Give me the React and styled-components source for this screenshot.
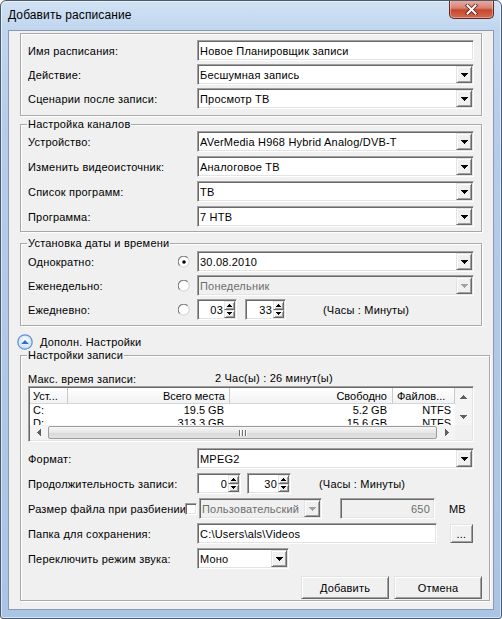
import React from 'react'
import styled, { createGlobalStyle, css } from 'styled-components'

const Global = createGlobalStyle`
  html, body { margin: 0; padding: 0; background: #fff; }
  body {
    font-family: 'Liberation Sans', Arial, sans-serif;
    font-size: 11px;
    letter-spacing: 0.2px;
    color: #000;
  }
`

const sunken = css`
  box-sizing: border-box;
  border: 1px solid;
  border-color: #a0a0a0 #fff #fff #a0a0a0;
  box-shadow: inset 1px 1px 0 #696969, inset -1px -1px 0 #e3e3e3;
`

const raised = css`
  box-sizing: border-box;
  background: #f0f0f0;
  border: 1px solid;
  border-color: #e3e3e3 #696969 #696969 #e3e3e3;
  box-shadow: inset 1px 1px 0 #fff, inset -1px -1px 0 #a0a0a0;
`

const Frame = styled.div`
  width: 502px;
  height: 619px;
  box-sizing: border-box;
  display: flex;
  flex-direction: column;
  border: 1px solid #4a5b70;
  border-radius: 6px 6px 3px 3px;
  background: linear-gradient(180deg, #d2e2f4 0px, #c0d6ef 28px, #b5cdeb 120px, #a9c4e5 619px);
  box-shadow: inset 0 0 0 1px rgba(255, 255, 255, 0.55);
  overflow: hidden;
`

const TitleBar = styled.div`
  height: 29px;
  flex: none;
  display: flex;
  align-items: flex-start;
  padding-left: 7px;
`

const Title = styled.span`
  font-family: 'Liberation Sans', Arial, sans-serif;
  font-size: 12px;
  letter-spacing: 0.1px;
  line-height: 29px;
  color: #000;
`

const CloseBtn = styled.div`
  margin-left: auto;
  margin-right: 7px;
  margin-top: -1px;
  width: 45px;
  height: 19px;
  box-sizing: border-box;
  border: 1px solid #5e2a24;
  border-top: none;
  border-radius: 0 0 5px 5px;
  background: linear-gradient(180deg, #eab0a5 0%, #d98070 45%, #c4482f 55%, #d5694f 100%);
  box-shadow: inset 0 0 0 1px rgba(255, 255, 255, 0.35);
  display: flex;
  align-items: center;
  justify-content: center;
`

const Client = styled.div`
  flex: 1;
  margin: 0 7px 8px 7px;
  background: #f0f0f0;
  border: 1px solid #8a9bb1;
  padding: 2px 3px 0 11px;
  display: flex;
  flex-direction: column;
  align-items: flex-start;
`

const etched = css`
  box-sizing: border-box;
  border: 1px solid #a8a8a8;
  box-shadow: inset 1px 1px 0 #fff, 1px 1px 0 #fff;
`

const Box = styled.div`
  ${etched};
  width: 462px;
  padding: 6px 7px 6px 7px;
`

const Group = styled.fieldset`
  ${etched};
  margin: ${p => p.$mt || 0}px 0 0 0;
  width: ${p => (p.$wide ? 470 : 462)}px;
  padding: 0 ${p => (p.$wide ? 15 : 7)}px ${p => p.$pb || 0}px 7px;
  min-width: 0;
`

const Legend = styled.legend`
  padding: 0 1px;
  margin-left: -1px;
  line-height: 13px;
  background: #f0f0f0;
`

const Rows = styled.div`
  display: flex;
  flex-direction: column;
  gap: ${p => p.$gap}px;
  margin-top: ${p => p.$mt || 0}px;
`

const Row = styled.div`
  display: flex;
  align-items: center;
  height: ${p => p.$h || 21}px;
  margin-top: ${p => p.$mt || 0}px;
`

const Label = styled.span`
  flex: none;
  width: ${p => p.$w || 169}px;
  white-space: nowrap;
  overflow: hidden;
  padding-top: 1px;
`

const Note = styled.span`
  margin-left: ${p => p.$ml}px;
  padding-top: 1px;
  white-space: nowrap;
`

const Field = styled.div`
  ${sunken};
  flex: none;
  width: ${p => p.$w}px;
  height: ${p => p.$h || 21}px;
  margin-left: ${p => p.$ml || 0}px;
  padding: 1px 1px 1px 2px;
  display: flex;
  align-items: center;
  background: ${p => (p.$disabled ? '#f0f0f0' : '#fff')};
  color: ${p => (p.$disabled ? '#6d6d6d' : '#000')};
`

const FieldText = styled.span`
  flex: 1;
  white-space: nowrap;
  overflow: hidden;
  padding-top: 1px;
  padding-right: ${p => p.$pr || 0}px;
  text-align: ${p => (p.$right ? 'right' : 'left')};
`

const DropBtn = styled.div`
  ${raised};
  flex: none;
  width: 16px;
  height: 17px;
  display: flex;
  align-items: center;
  justify-content: center;
`

const SpinCol = styled.div`
  flex: none;
  width: 11px;
  height: 17px;
  display: flex;
  flex-direction: column;
`

const SpinBtn = styled.div`
  ${raised};
  flex: 1;
  display: flex;
  align-items: center;
  justify-content: center;
`

const RadioWrap = styled.span`
  flex: none;
  width: 12px;
  height: 12px;
  margin-right: 7px;
  display: flex;
`

const Check = styled.span`
  ${sunken};
  flex: none;
  width: 12px;
  height: 12px;
  background: #fff;
  margin-right: 1px;
`

const Toggle = styled.div`
  display: flex;
  align-items: center;
  gap: 7px;
  height: 15px;
  margin: 8px 0 0 -3px;
`

const List = styled.div`
  ${sunken};
  flex: none;
  width: 446px;
  height: 56px;
  padding: 1px;
  background: #fff;
  display: grid;
  grid-template-columns: 1fr 17px;
  grid-template-rows: 1fr 15px;
  overflow: hidden;
  letter-spacing: 0;
`

const ListBody = styled.div`
  overflow: hidden;
`

const ListRow = styled.div`
  display: flex;
  height: ${p => (p.$head ? 16 : 13)}px;
  line-height: ${p => (p.$head ? 16 : 13)}px;
`

const Cell = styled.div`
  flex: none;
  box-sizing: border-box;
  width: ${p => p.$w}px;
  padding: 0 ${p => p.$pr || 4}px 0 ${p => p.$pl || 3}px;
  text-align: ${p => p.$align || 'left'};
  white-space: nowrap;
  overflow: hidden;
  ${p => p.$head && css`
    background: linear-gradient(180deg, #ffffff, #f1f2f4);
    border-right: 1px solid #c9c9c9;
    border-bottom: 1px solid #d5d5d5;
  `}
`

const VScroll = styled.div`
  background: #f4f4f4;
  display: flex;
  flex-direction: column;
  justify-content: space-between;
`

const ScrollArrow = styled.div`
  height: ${p => p.$h || 17}px;
  width: ${p => p.$w || 17}px;
  flex: none;
  display: flex;
  align-items: center;
  justify-content: center;
`

const HScroll = styled.div`
  background: #f4f4f4;
  display: flex;
  align-items: center;
`

const Thumb = styled.div`
  flex: 1;
  height: 13px;
  margin: 0 1px;
  box-sizing: border-box;
  border: 1px solid #9c9c9c;
  border-radius: 2px;
  background: linear-gradient(180deg, #f6f6f6 0%, #e6e6e6 50%, #d8d8d8 51%, #e2e2e2 100%);
  display: flex;
  align-items: center;
  justify-content: center;
  gap: 2px;
`

const Grip = styled.span`
  width: 1px;
  height: 6px;
  background: #707070;
  box-shadow: 1px 0 0 #fff;
`

const Corner = styled.div`
  background: #f0f0f0;
`

const ButtonRow = styled.div`
  display: flex;
  justify-content: flex-end;
  gap: 5px;
  margin: 7px -8px 1px 0;
`

const Button = styled.div`
  ${raised};
  width: ${p => p.$w || 88}px;
  height: ${p => p.$h || 23}px;
  margin-left: ${p => p.$ml || 0}px;
  flex: none;
  display: flex;
  align-items: center;
  justify-content: center;
  padding-top: 1px;
`

const Tri = ({ up, color = '#000' }) =>
  up ? (
    <svg width="7" height="4" viewBox="0 0 7 4">
      <path d="M3 0h1v1h1v1h1v1h1v1H0V3h1V2h1V1h1z" fill={color} />
    </svg>
  ) : (
    <svg width="7" height="4" viewBox="0 0 7 4">
      <path d="M0 0h7v1H6v1H5v1H4v1H3V3H2V2H1V1H0z" fill={color} />
    </svg>
  )

const SmallTri = ({ up }) => (
  <svg width="5" height="3" viewBox="0 0 5 3">
    {up ? <path d="M2 0h1v1h1v1h1v1H0V2h1V1h1z" fill="#000" /> : <path d="M0 0h5v1H4v1H3v1H2V2H1V1H0z" fill="#000" />}
  </svg>
)

const SideTri = ({ right }) => (
  <svg width="4" height="7" viewBox="0 0 4 7">
    {right
      ? <path d="M0 0h1v1h1v1h1v1h1v1H3v1H2v1H1v1H0z" fill="#606060" />
      : <path d="M3 0h1v7H3V6H2V5H1V4H0V3h1V2h1V1h1z" fill="#606060" />}
  </svg>
)

const Combo = ({ w, text, disabled, ml }) => (
  <Field $w={w} $disabled={disabled} $ml={ml}>
    <FieldText>{text}</FieldText>
    <DropBtn>
      <Tri color={disabled ? '#a0a0a0' : '#000'} />
    </DropBtn>
  </Field>
)

const Spin = ({ w, value, ml }) => (
  <Field $w={w} $ml={ml}>
    <FieldText $right $pr={1}>{value}</FieldText>
    <SpinCol>
      <SpinBtn><SmallTri up /></SpinBtn>
      <SpinBtn><SmallTri /></SpinBtn>
    </SpinCol>
  </Field>
)

const Radio = ({ checked }) => (
  <RadioWrap>
    <svg width="12" height="12" viewBox="0 0 12 12">
      <circle cx="6" cy="6" r="5" fill="#fff" />
      <path d="M1.8 9.6 A5.2 5.2 0 0 1 9.6 1.8" fill="none" stroke="#808080" strokeWidth="1.2" />
      <path d="M9.6 1.8 A5.2 5.2 0 0 1 1.8 9.6" fill="none" stroke="#d8d8d8" strokeWidth="1.2" />
      {checked && <circle cx="6" cy="6" r="1.8" fill="#000" />}
    </svg>
  </RadioWrap>
)

const ToggleIcon = () => (
  <svg width="16" height="16" viewBox="0 0 16 16">
    <defs>
      <radialGradient id="tg" cx="50%" cy="40%" r="60%">
        <stop offset="0" stopColor="#ffffff" />
        <stop offset="1" stopColor="#c4dcf6" />
      </radialGradient>
    </defs>
    <circle cx="8" cy="8" r="7.2" fill="url(#tg)" stroke="#5d90d0" strokeWidth="1.2" />
    <path d="M4.2 10 L8 6 L11.8 10 Z" fill="#2f6fc4" />
  </svg>
)

const CloseGlyph = () => (
  <svg width="13" height="11" viewBox="0 0 13 11">
    <path d="M2.5 1.5 L10.5 9.5 M10.5 1.5 L2.5 9.5" stroke="#5a1e16" strokeWidth="3.6" strokeLinecap="square" />
    <path d="M2.5 1.5 L10.5 9.5 M10.5 1.5 L2.5 9.5" stroke="#fff" strokeWidth="2" strokeLinecap="square" />
  </svg>
)

const columns = [
  { w: 38, head: 'Уст...', align: 'left', pl: 3 },
  { w: 162, head: 'Всего места', align: 'right', pr: 4 },
  { w: 163, head: 'Свободно', align: 'right', pr: 5 },
  { w: 62, head: 'Файлов...', align: 'left', pl: 4 },
]

const drives = [
  ['C:', '19.5 GB', '5.2 GB', 'NTFS'],
  ['D:', '313.3 GB', '15.6 GB', 'NTFS'],
]

export default function App() {
  return (
    <>
      <Global />
      <Frame>
        <TitleBar>
          <Title>Добавить расписание</Title>
          <CloseBtn><CloseGlyph /></CloseBtn>
        </TitleBar>
        <Client>
          <Box>
            <Rows $gap={3}>
              <Row>
                <Label>Имя расписания:</Label>
                <Field $w={277}><FieldText>Новое Планировщик записи</FieldText></Field>
              </Row>
              <Row>
                <Label>Действие:</Label>
                <Combo w={277} text="Бесшумная запись" />
              </Row>
              <Row>
                <Label>Сценарии после записи:</Label>
                <Combo w={277} text="Просмотр ТВ" />
              </Row>
            </Rows>
          </Box>

          <Group $mt={2} $pb={4}>
            <Legend>Настройка каналов</Legend>
            <Rows $gap={4}>
              <Row>
                <Label>Устройство:</Label>
                <Combo w={277} text="AVerMedia H968 Hybrid Analog/DVB-T" />
              </Row>
              <Row>
                <Label>Изменить видеоисточник:</Label>
                <Combo w={277} text="Аналоговое ТВ" />
              </Row>
              <Row>
                <Label>Список программ:</Label>
                <Combo w={277} text="ТВ" />
              </Row>
              <Row>
                <Label>Программа:</Label>
                <Combo w={277} text="7 НТВ" />
              </Row>
            </Rows>
          </Group>

          <Group $mt={5} $pb={5}>
            <Legend>Установка даты и времени</Legend>
            <Rows $gap={3} $mt={1}>
              <Row>
                <Label $w={150}>Однократно:</Label>
                <Radio checked />
                <Combo w={277} text="30.08.2010" />
              </Row>
              <Row>
                <Label $w={150}>Еженедельно:</Label>
                <Radio />
                <Combo w={277} text="Понедельник" disabled />
              </Row>
              <Row>
                <Label $w={150}>Ежедневно:</Label>
                <Radio />
                <Spin w={40} value="03" />
                <Spin w={41} value="33" ml={8} />
                <Note $ml={37}>(Часы : Минуты)</Note>
              </Row>
            </Rows>
          </Group>

          <Toggle>
            <ToggleIcon />
            <span>Дополн. Настройки</span>
          </Toggle>

          <Group $wide>
            <Legend>Настройки записи</Legend>
            <Row $h={16} $mt={8}>
              <Label $w={187}>Макс. время записи:</Label>
              <span>2 Час(ы) : 26 минут(ы)</span>
            </Row>
            <List>
              <ListBody>
                <ListRow $head>
                  {columns.map(c => (
                    <Cell key={c.head} $head $w={c.w} $align={c.align} $pl={c.pl} $pr={c.pr}>{c.head}</Cell>
                  ))}
                </ListRow>
                {drives.map(d => (
                  <ListRow key={d[0]}>
                    <Cell $w={38} $pl={3}>{d[0]}</Cell>
                    <Cell $w={162} $align="right" $pr={6}>{d[1]}</Cell>
                    <Cell $w={163} $align="right" $pr={6}>{d[2]}</Cell>
                    <Cell $w={62} $align="right" $pr={4}>{d[3]}</Cell>
                  </ListRow>
                ))}
              </ListBody>
              <VScroll>
                <ScrollArrow><Tri up color="#606060" /></ScrollArrow>
                <ScrollArrow><Tri color="#606060" /></ScrollArrow>
              </VScroll>
              <HScroll>
                <ScrollArrow $h={15}><SideTri /></ScrollArrow>
                <Thumb><Grip /><Grip /><Grip /></Thumb>
                <ScrollArrow $h={15}><SideTri right /></ScrollArrow>
              </HScroll>
              <Corner />
            </List>

            <Rows $gap={4} $mt={6}>
              <Row>
                <Label>Формат:</Label>
                <Combo w={277} text="MPEG2" />
              </Row>
              <Row>
                <Label>Продолжительность записи:</Label>
                <Spin w={44} value="0" />
                <Spin w={44} value="30" ml={6} />
                <Note $ml={28}>(Часы : Минуты)</Note>
              </Row>
              <Row>
                <Label $w={157}>Размер файла при разбиении:</Label>
                <Check />
                <Combo w={123} text="Пользовательский" disabled ml={1} />
                <Field $w={95} $ml={18} $disabled>
                  <FieldText $right $pr={3}>650</FieldText>
                </Field>
                <Note $ml={14}>MB</Note>
              </Row>
              <Row>
                <Label>Папка для сохранения:</Label>
                <Field $w={240}><FieldText>C:\Users\als\Videos</FieldText></Field>
                <Button $w={23} $h={19} $ml={13}>...</Button>
              </Row>
              <Row>
                <Label>Переключить режим звука:</Label>
                <Combo w={92} text="Моно" />
              </Row>
            </Rows>

            <ButtonRow>
              <Button>Добавить</Button>
              <Button>Отмена</Button>
            </ButtonRow>
          </Group>
        </Client>
      </Frame>
    </>
  )
}
